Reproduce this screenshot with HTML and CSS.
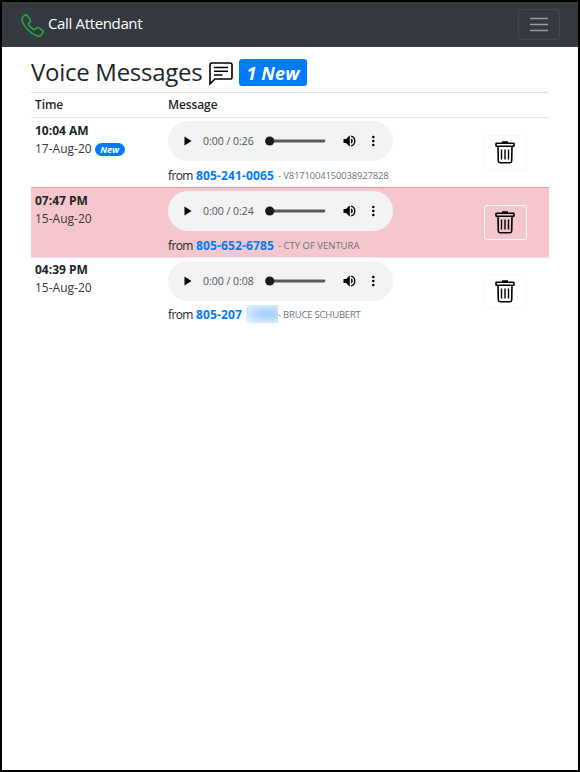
FILE: index.html
```html
<!DOCTYPE html>
<html lang="en">
<head>
<meta charset="utf-8">
<title>Call Attendant</title>
<link rel="stylesheet" href="styles.css">
</head>
<body>
<svg class="symbols" aria-hidden="true">
  <symbol id="trash" viewBox="0 0 20 23">
    <path d="M3 5.5 3.300 20a1.800 1.800 0 0 0 1.800 1.700h9.800a1.800 1.800 0 0 0 1.800-1.700L17 5.500M1.600 2.200h16.800a.6.600 0 0 1 .6.600v1.900a.6.600 0 0 1-.6.600H1.600a.6.600 0 0 1-.6-.6V2.800a.6.600 0 0 1 .6-.6ZM7 1h6" fill="none" stroke="#000" stroke-width="1.600"/>
    <path d="M6.500 8.500v10M10 8.500v10M13.500 8.500v10" stroke="#000" stroke-width="1.400"/>
  </symbol>
  <symbol id="controls" viewBox="0 0 225 40">
    <path d="M16.500 15.500v9l7-4.500z" fill="#000"/>
    <path d="M101 20h55" stroke="#5a5a5a" stroke-width="2.800" stroke-linecap="round"/>
    <circle cx="101.700" cy="20" r="4.600" fill="#1b1b1b"/>
    <path d="M175.500 18v4h2.600l3.700 3.700V14.300L178.100 18z" fill="#000"/>
    <path d="M183.100 17.300a3 3 0 0 1 0 5.400z" fill="#000"/>
    <path d="M183.100 15.100a5.100 5.100 0 0 1 0 9.800" fill="none" stroke="#000" stroke-width="1.300"/>
    <g fill="#000"><circle cx="205.300" cy="16" r="1.300"/><circle cx="205.300" cy="20" r="1.300"/><circle cx="205.300" cy="24" r="1.300"/></g>
  </symbol>
</svg>
<div class="frame">
  <nav class="navbar">
    <a class="brand">
      <svg class="phone" viewBox="0 0 23 24"><path d="M4 1.200C5 .6 6 1 6.600 1.900L9 5.200c.7 1 .6 1.800-.1 2.700L7.900 9.200c-.5.700-.4 1.400.1 2.100 1.200 1.600 2.600 3 4.200 4 .7.500 1.400.5 2-.1l1.200-1.100c.8-.7 1.700-.8 2.700-.2l3.100 2.200c1.200.9 1.400 2 .5 3l-1.400 1.800c-1 1.200-2.400 1.600-4.100 1.100-3.100-.9-6.200-2.900-9-5.700C4.500 13.600 2.400 10.300 1.200 6.900.700 5.200.9 3.900 2 2.800z"/></svg>
      <span class="brand-name">Call Attendant</span>
    </a>
    <button class="toggler" aria-label="Toggle navigation"><svg viewBox="0 0 18 15"><path d="M0 1.500h18M0 7.500h18M0 13.500h18"/></svg></button>
  </nav>
  <main class="content">
    <h1 class="title">
      <span class="title-text">Voice Messages</span>
      <svg class="chat" viewBox="0 0 24 24"><path d="M2.800 1h18.400A1.800 1.800 0 0 1 23 2.800v12.400a1.800 1.800 0 0 1-1.800 1.800H6L1 21.800V2.800A1.800 1.800 0 0 1 2.800 1Z"/><path d="M5 5.500h14M5 9.300h14M5 13h8.500"/></svg>
      <span class="count"><span>1 New</span></span>
    </h1>
    <section class="table">
      <div class="row head"><div>Time</div><div>Message</div><div></div></div>
      <div class="row">
        <div class="when"><b class="time">10:04 AM</b><div class="date-line"><span class="date">17-Aug-20</span><span class="pill">New</span></div></div>
        <div class="message">
          <div class="player"><svg><use href="#controls"/></svg><span class="clock">0:00 / 0:26</span></div>
          <div class="from"><span class="word">from</span><a class="number">805-241-0065</a><span class="caller c1">- V8171004150038927828</span></div>
        </div>
        <div class="action"><button class="delete" aria-label="Delete"><svg><use href="#trash"/></svg></button></div>
      </div>
      <div class="row blocked">
        <div class="when"><b class="time">07:47 PM</b><div class="date-line"><span class="date">15-Aug-20</span></div></div>
        <div class="message">
          <div class="player"><svg><use href="#controls"/></svg><span class="clock">0:00 / 0:24</span></div>
          <div class="from"><span class="word">from</span><a class="number">805-652-6785</a><span class="caller">- CTY OF VENTURA</span></div>
        </div>
        <div class="action"><button class="delete" aria-label="Delete"><svg><use href="#trash"/></svg></button></div>
      </div>
      <div class="row last">
        <div class="when"><b class="time">04:39 PM</b><div class="date-line"><span class="date">15-Aug-20</span></div></div>
        <div class="message">
          <div class="player"><svg><use href="#controls"/></svg><span class="clock">0:00 / 0:08</span></div>
          <div class="from"><span class="word">from</span><a class="number short">805-207</a><span class="smudge"></span><span class="caller c3">- BRUCE SCHUBERT</span></div>
        </div>
        <div class="action"><button class="delete" aria-label="Delete"><svg><use href="#trash"/></svg></button></div>
      </div>
    </section>
  </main>
</div>
</body>
</html>
```
FILE: styles.css
```css
* { box-sizing: border-box; }
body { margin: 0; font-family: "Open Sans", "Noto Sans", sans-serif; font-size: 12px; color: #212529; background: #fff; }
button { padding: 0; background: none; font: inherit; }
svg { display: block; flex: none; }
.symbols { display: none; }
.frame { height: 772px; border: 2px solid #000; }
.navbar { height: 45px; display: flex; align-items: center; justify-content: space-between; padding: 0 18px 0 19px; background: #343a40; }
.brand { display: flex; align-items: center; gap: 4px; color: #fff; }
.phone { width: 23px; height: 24px; margin-top: 2px; fill: none; stroke: #28a745; stroke-width: 1.6; }
.brand-name { margin-top: -3px; font-size: 15px; line-height: 20px; letter-spacing: -.35px; }
.toggler { width: 42px; height: 31px; display: grid; place-items: center; border: 1px solid #42484e; border-radius: 4px; }
.toggler svg { width: 18px; height: 15px; stroke: #999c9f; stroke-width: 1.5; }
.content { padding: 10px 29px 0; }
.title { height: 35px; margin: 0; display: flex; align-items: flex-start; font-weight: 400; }
.title-text { width: 178px; font-size: 24px; line-height: 30px; letter-spacing: -.28px; white-space: nowrap; }
.chat { width: 24px; height: 24px; margin-top: 5px; fill: none; stroke: #000; stroke-width: 1.6; }
.count { width: 68px; height: 27px; margin: 2px 0 0 6px; display: grid; place-items: center; border-radius: 3px; background: #007bff; color: #fff; font: italic 700 18px/28px "Open Sans", sans-serif; letter-spacing: .1px; }
.row { display: grid; grid-template-columns: 133px 316px 69px; height: 70px; border-bottom: 1px solid #dee2e6; padding: 3px 0 0; }
.row > div:nth-child(-n+2) { padding-left: 4px; }
.head { height: 26px; padding: 0; border-top: 1px solid #dee2e6; line-height: 24px; font-weight: 600; letter-spacing: -.1px; }
.row:nth-child(2) { border-bottom-color: #ed969e; }
.blocked { border-bottom-color: #e9dfe2; background: #f5c6cb; }
.last { border: 0; height: 69px; }
.when { padding-top: 1px; line-height: 18px; }
.last .when { padding-top: 0; }
.time { display: block; letter-spacing: 0; }
.date-line { display: flex; align-items: center; gap: 3px; }
.date { color: #343a40; }
.pill { width: 30px; height: 13px; border-radius: 7px; background: #007bff; color: #fff; font: italic 700 9px/13px "Open Sans", sans-serif; text-align: center; }
.player { position: relative; width: 225px; height: 40px; border-radius: 20px; background: #f1f3f4; }
.player svg { width: 225px; height: 40px; }
.clock { position: absolute; left: 35px; top: 11px; font-size: 10.5px; line-height: 18px; color: #555; white-space: nowrap; }
.from { display: flex; align-items: center; height: 18px; margin-top: 5px; white-space: nowrap; }
.last .from { margin-top: 4px; }
.word { width: 28px; letter-spacing: -.6px; }
.number { width: 82px; color: #007bff; font-weight: 700; letter-spacing: .15px; }
.short { width: 50px; }
.smudge { width: 32px; height: 18px; background: radial-gradient(ellipse at 65% 50%, #a8d0ff 0 15%, #d2e6fd 65%, #eaf3fd); }
.caller { font-size: 9.5px; color: #6c757d; }
.c1 { letter-spacing: -.18px; }
.c3 { letter-spacing: -.2px; }
.action { padding: 14px 0 0 4px; }
.last .action { padding-top: 13px; }
.delete { width: 43px; height: 35px; padding-right: 1px; display: grid; place-items: center; border: 1px solid #f8f9fa; border-radius: 3px; }
.delete svg { width: 20px; height: 23px; }
```
